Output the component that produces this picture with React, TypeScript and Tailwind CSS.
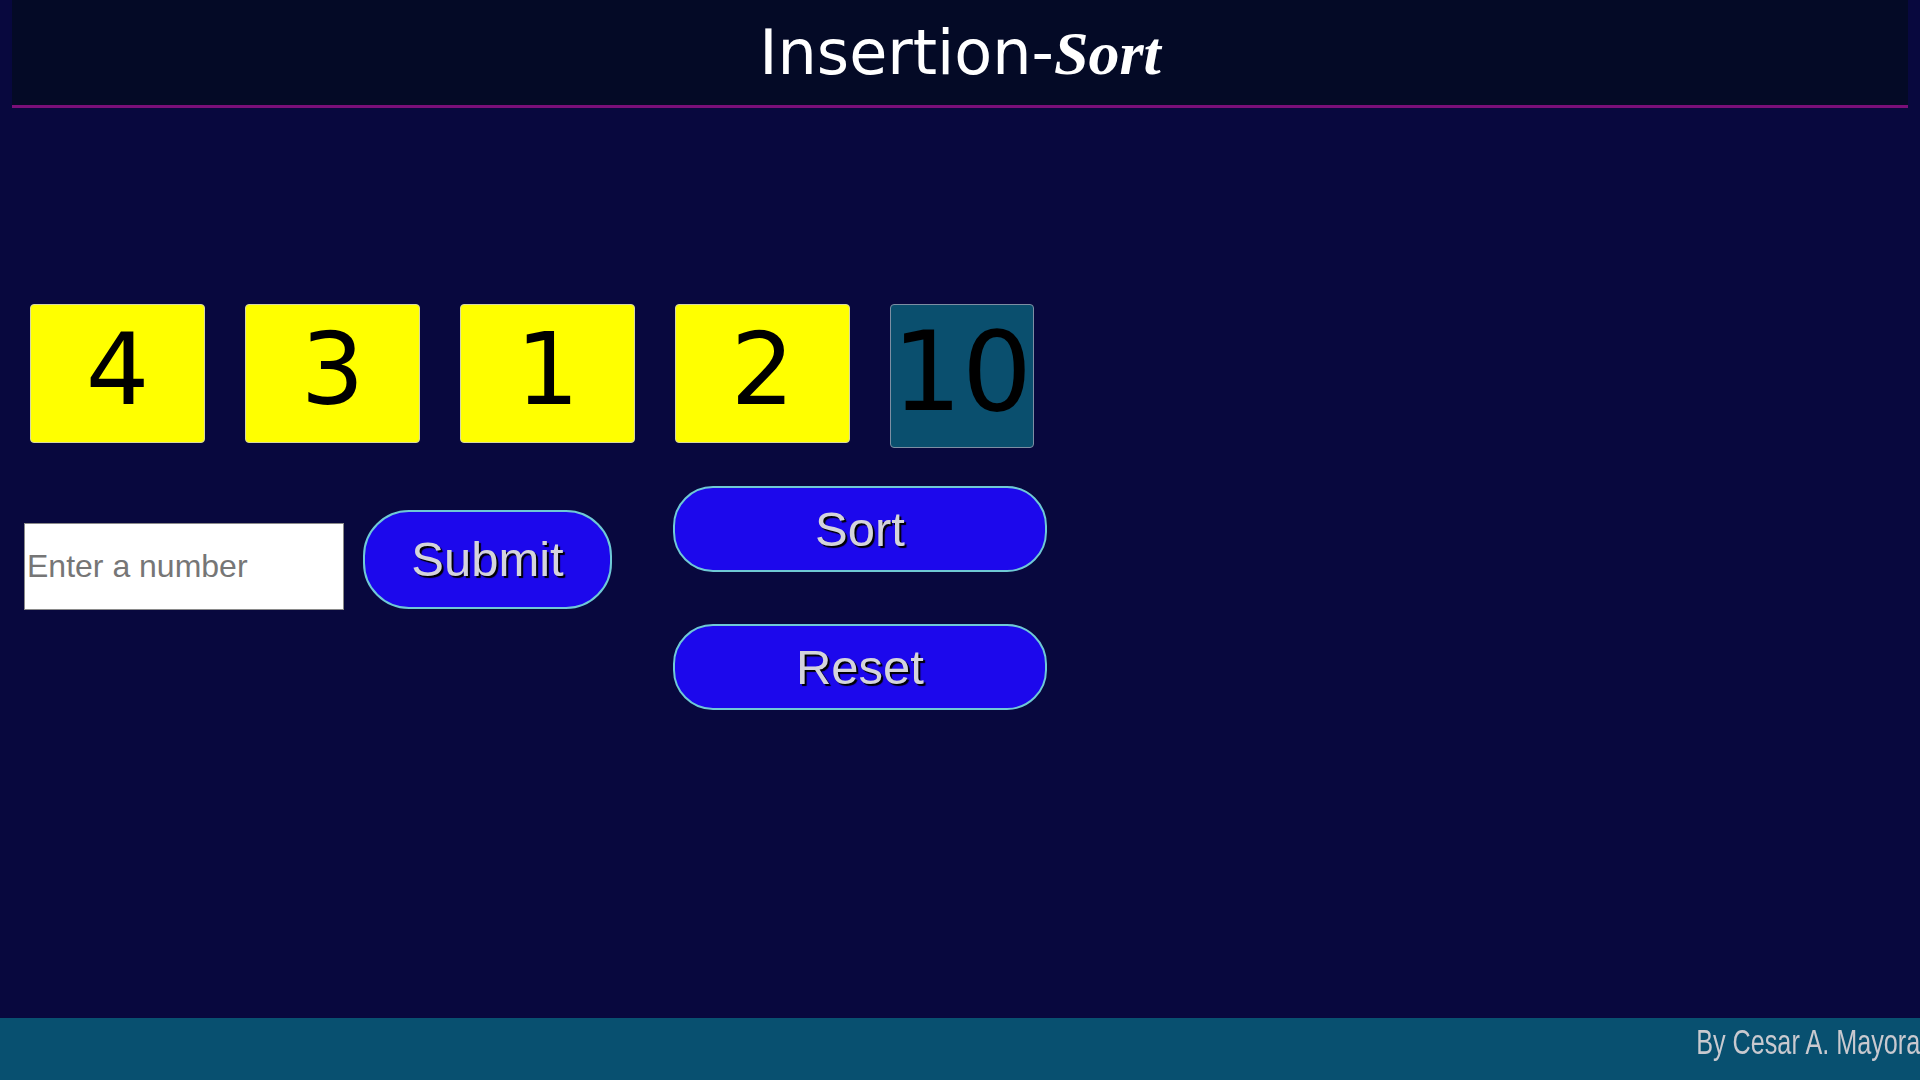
import { useState } from "react";

const items = [
  { value: 4, active: false },
  { value: 3, active: false },
  { value: 1, active: false },
  { value: 2, active: false },
  { value: 10, active: true },
];

function NumberBox({ value, active }: { value: number; active: boolean }) {
  if (active) {
    return (
      <div className="flex h-[144px] w-[144px] items-center justify-center rounded-[4px] border border-[#7d8ea3] bg-[#0a4f6e] font-['DejaVu_Sans',sans-serif] text-[110px] leading-none text-black">
        <span className="-mt-2">{value}</span>
      </div>
    );
  }
  return (
    <div className="flex h-[139px] w-[175px] items-center justify-center rounded-[4px] border border-[#d8d8a0] bg-[#ffff00] font-['DejaVu_Sans',sans-serif] text-[100px] leading-none text-black">
      <span className="-mt-2">{value}</span>
    </div>
  );
}

function BlueButton({ label, className }: { label: string; className: string }) {
  return (
    <button
      className={
        "flex items-center justify-center border-2 border-[#6fc9d6] bg-[#1c08ec] font-['Liberation_Sans',Arial,sans-serif] text-[49px] leading-none text-[#d4d4dc] [text-shadow:2px_2px_1px_#000] " +
        className
      }
    >
      {label}
    </button>
  );
}

export default function App() {
  const [num, setNum] = useState("");

  return (
    <div className="flex min-h-screen flex-col bg-[#08083e]">
      <header className="mx-[12px] flex h-[108px] items-center justify-center border-b-[3px] border-[#7a0f78] bg-[#040a26]">
        <h1 className="font-['DejaVu_Sans',Verdana,sans-serif] text-[62px] leading-none text-white">
          Insertion-
          <span className="font-['Liberation_Serif',serif] font-bold italic">Sort</span>
        </h1>
      </header>

      <main className="flex-1">
        <div className="ml-[30px] mt-[196px] flex items-start gap-[40px]">
          {items.map((it, i) => (
            <NumberBox key={i} value={it.value} active={it.active} />
          ))}
        </div>

        <div className="mt-[38px] flex items-start">
          <input
            autoFocus
            value={num}
            onChange={(e) => setNum(e.target.value)}
            placeholder="Enter a number"
            className="ml-[24px] mt-[37px] h-[87px] w-[320px] border border-[#8a8a8a] bg-white px-[2px] font-['Liberation_Sans',Arial,sans-serif] text-[32px] text-black outline-none placeholder:text-[#767676]"
          />
          <BlueButton label="Submit" className="ml-[19px] mt-[24px] h-[99px] w-[249px] rounded-[46px]" />
          <div className="ml-[61px] flex flex-col gap-[52px]">
            <BlueButton label="Sort" className="h-[86px] w-[374px] rounded-[40px]" />
            <BlueButton label="Reset" className="h-[86px] w-[374px] rounded-[40px]" />
          </div>
        </div>
      </main>

      <footer className="flex h-[62px] items-start justify-end overflow-hidden bg-[#085070]">
        <p className="mt-[2px] origin-right whitespace-nowrap font-['Liberation_Sans_Narrow','Liberation_Sans',sans-serif] text-[35px] leading-[44px] text-[#c9c9cf] [transform:scaleX(0.72)]">
          By Cesar A. Mayora
        </p>
      </footer>
    </div>
  );
}
